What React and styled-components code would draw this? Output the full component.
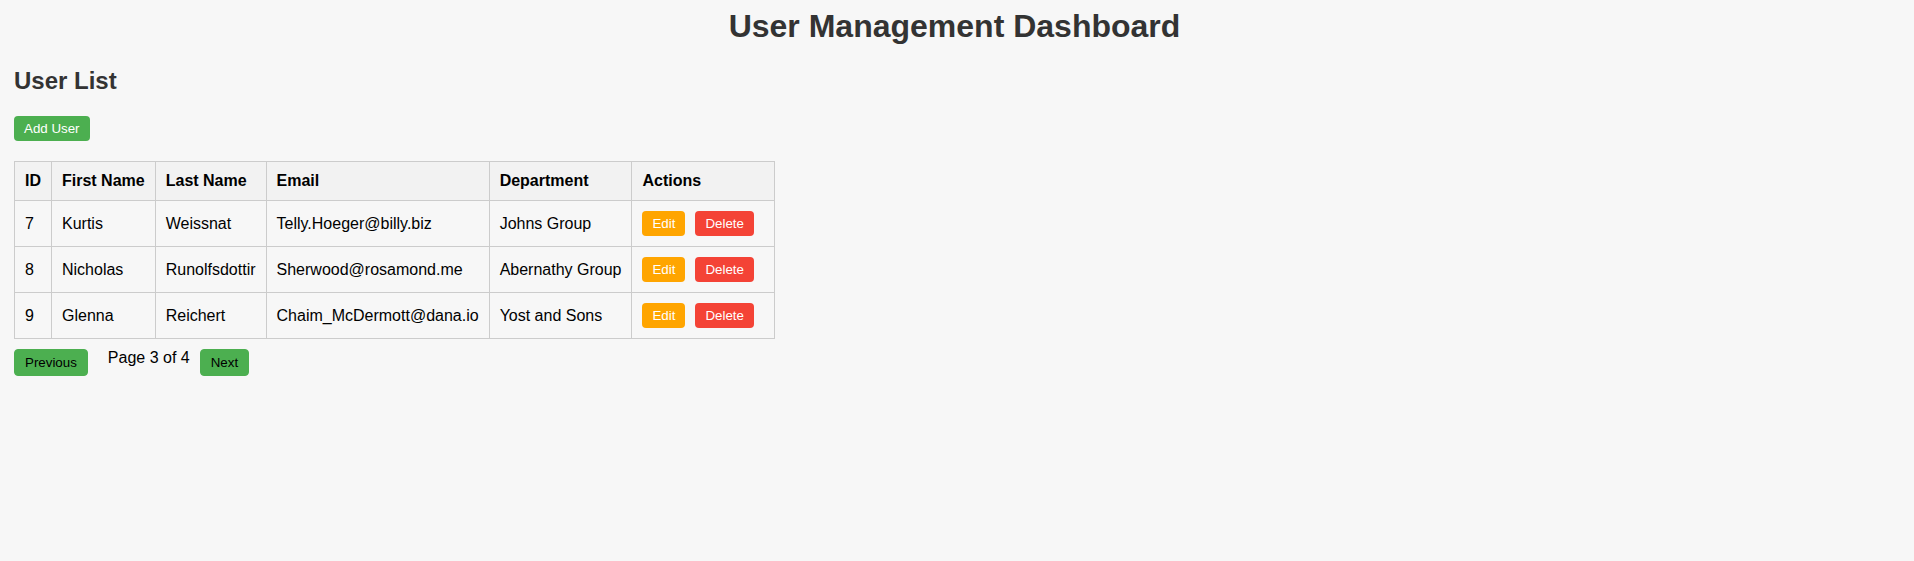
import React from "react";
import styled, { createGlobalStyle } from "styled-components";

const GlobalStyle = createGlobalStyle`
  html, body {
    margin: 0;
    padding: 0;
    background: #f7f7f7;
  }
  body {
    font-family: "Liberation Sans", Arial, sans-serif;
    color: #000;
  }
`;

const Page = styled.div`
  padding: 8px 19px 8px 14px;
`;

const Title = styled.h1`
  margin: 0 0 22px;
  font-size: 32px;
  font-weight: bold;
  color: #333;
  text-align: center;
`;

const SubTitle = styled.h2`
  margin: 0 0 21px;
  font-size: 24px;
  font-weight: bold;
  color: #333;
`;

const Button = styled.button`
  font-family: "Liberation Sans", Arial, sans-serif;
  font-size: 13.333px;
  line-height: normal;
  padding: 5px 10px;
  border: ${(p) => (p.$bordered ? `1px solid ${p.$bg}` : "none")};
  border-radius: 4px;
  background: ${(p) => p.$bg};
  color: ${(p) => p.$fg || "#fff"};
  margin-right: ${(p) => p.$mr || 0}px;
  cursor: pointer;
`;

const AddRow = styled.div`
  margin-bottom: 20px;
`;

const Table = styled.table`
  border-collapse: collapse;
  font-size: 16px;
`;

const Th = styled.th`
  border: 1px solid #ccc;
  background: #f2f2f2;
  padding: 10px;
  text-align: left;
  font-weight: bold;
`;

const Td = styled.td`
  border: 1px solid #ccc;
  padding: 10px;
  text-align: left;
`;

const ActionsCell = styled(Td)`
  white-space: nowrap;
`;

const Pagination = styled.div`
  display: flex;
  margin-top: 10px;
  font-size: 16px;
`;

const PageInfo = styled.span`
  margin: 0 10px;
`;

const users = [
  { id: 7, first: "Kurtis", last: "Weissnat", email: "Telly.Hoeger@billy.biz", dept: "Johns Group" },
  { id: 8, first: "Nicholas", last: "Runolfsdottir", email: "Sherwood@rosamond.me", dept: "Abernathy Group" },
  { id: 9, first: "Glenna", last: "Reichert", email: "Chaim_McDermott@dana.io", dept: "Yost and Sons" },
];

export default function App() {
  return (
    <>
      <GlobalStyle />
      <Page>
        <Title>User Management Dashboard</Title>
        <SubTitle>User List</SubTitle>
        <AddRow>
          <Button $bg="#4caf50">Add User</Button>
        </AddRow>
        <Table>
          <thead>
            <tr>
              <Th>ID</Th>
              <Th>First Name</Th>
              <Th>Last Name</Th>
              <Th>Email</Th>
              <Th>Department</Th>
              <Th>Actions</Th>
            </tr>
          </thead>
          <tbody>
            {users.map((u) => (
              <tr key={u.id}>
                <Td>{u.id}</Td>
                <Td>{u.first}</Td>
                <Td>{u.last}</Td>
                <Td>{u.email}</Td>
                <Td>{u.dept}</Td>
                <ActionsCell>
                  <Button $bg="#ffa500" $mr={10}>Edit</Button>
                  <Button $bg="#f44336" $mr={10}>Delete</Button>
                </ActionsCell>
              </tr>
            ))}
          </tbody>
        </Table>
        <Pagination>
          <Button $bg="#4caf50" $fg="#000" $bordered $mr={10}>Previous</Button>
          <PageInfo>Page 3 of 4</PageInfo>
          <Button $bg="#4caf50" $fg="#000" $bordered>Next</Button>
        </Pagination>
      </Page>
    </>
  );
}
